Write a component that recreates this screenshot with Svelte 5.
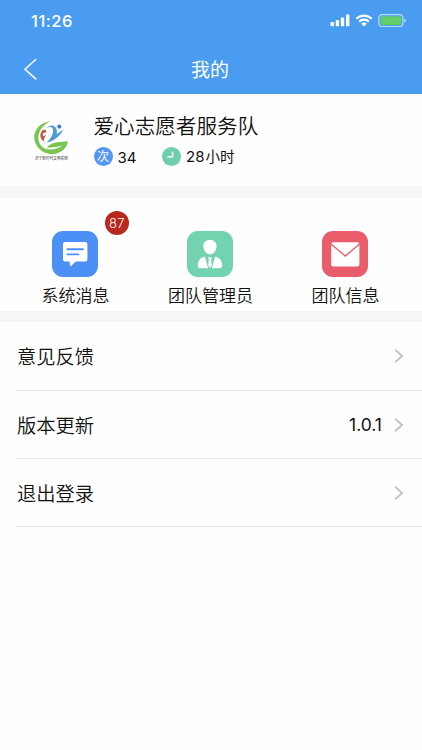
<script>
  const rows = [
    { label: '意见反馈', value: '' },
    { label: '版本更新', value: '1.0.1' },
    { label: '退出登录', value: '' }
  ];
</script>

<main>
  <header>
    <div class="status">
      <span class="time">11:26</span>
      <svg width="78" height="16" viewBox="0 0 78 16" fill="#fff">
        <rect x="0.5" y="9" width="3.4" height="4.3" rx="0.9" />
        <rect x="5.7" y="7" width="3.4" height="6.3" rx="0.9" />
        <rect x="10.8" y="4.5" width="3.4" height="8.8" rx="0.9" />
        <rect x="16" y="1.5" width="3.4" height="11.8" rx="0.9" />
        <g fill="none" stroke="#fff" stroke-width="2.2">
          <path d="M26.3 5.8 C30.5 1.5 37.5 1.5 41.7 5.8" />
          <path d="M29.1 8.7 C31.8 6 36.2 6 38.9 8.7" />
        </g>
        <path d="M31.3 10.7 Q34 8.5 36.7 10.7 L34 13.5 Z" />
        <rect x="48.9" y="1.7" width="24" height="11.8" rx="3.4" fill="none" stroke="#b5dcf2" stroke-width="1.2" />
        <rect x="50.6" y="3.3" width="20.6" height="8.6" rx="2" fill="#66ce69" />
        <path d="M74.3 5.7 Q76 6.2 76 7.6 Q76 9 74.3 9.5 Z" fill="#b5dcf2" />
      </svg>
    </div>
    <div class="nav">
      <svg class="back" width="16" height="24" viewBox="0 0 16 24" fill="none" stroke="#fff" stroke-width="1.5">
        <path d="M13.3 2 L2 12.2 L13.3 22.4" />
      </svg>
      <h1>我的</h1>
    </div>
  </header>

  <section class="profile">
    <svg class="logo" width="42" height="46" viewBox="0 0 42 46">
      <path d="M16.5 1.2 C4 2.5 -2 13 1 22 C4.2 31.5 14 35.5 22 33.7 C28.5 32 33.2 27 34 21.6 C28 22 17.5 21.5 12.7 27.6 C18 27.4 25 27.3 29 25 C24.5 28.8 17 30.8 11.5 28.8 C1.5 25 1 8.5 16.5 1.2 Z" fill="#79c552" />
      <path d="M9.3 9.2 C5 13.5 5.5 19 10.4 21.6 C9 18.8 11.3 17.5 11.9 14.5 L9.8 16.3 C8 15.3 8.8 13.3 10.3 12 Z" fill="#bd5740" />
      <circle cx="10.7" cy="11.2" r="1.5" fill="#bd5740" />
      <path d="M12.5 8.2 C16 5.8 19.2 7 19.2 10.8 C19.2 15 16.5 18.8 12.7 22.5 C19.5 21.3 25.5 17 29.3 9.5 L22.6 14.3 C24.5 6.7 18 2.4 12.5 8.2 Z" fill="#4b9bd5" />
      <circle cx="25.3" cy="6.6" r="2.1" fill="#3b7fd0" />
      <text x="1" y="39.8" textLength="33" lengthAdjust="spacingAndGlyphs">济宁新时代文明实践</text>
    </svg>
    <div class="info">
      <h2>爱心志愿者服务队</h2>
      <div class="stats">
        <span class="dot blue">次</span>
        <span class="count">34</span>
        <span class="dot green">
          <svg width="19" height="19" viewBox="0 0 19 19" fill="none" stroke="#fff" stroke-width="1.5"><path d="M10.6 4.8 V9.8 H5.4" /></svg>
        </span>
        <span class="hours">28<i>小时</i></span>
      </div>
    </div>
  </section>

  <section class="menu">
    <div class="item">
      <svg width="46" height="46" viewBox="0 0 46 46">
        <rect width="46" height="46" rx="11" fill="#4c8ff5" />
        <path d="M13 11 H33.4 Q35.4 11 35.4 13 V28.6 Q35.4 30.6 33.4 30.6 H24 L18.6 35.2 Q17.8 35.7 17.8 34.6 V30.6 H13 Q11 30.6 11 28.6 V13 Q11 11 13 11 Z" fill="#fff" />
        <path d="M15.5 18.2 H31 M15.5 23.4 H26.5" stroke="#4c8ff5" stroke-width="1.9" stroke-linecap="round" />
      </svg>
      <span>系统消息</span>
      <b class="badge">87</b>
    </div>
    <div class="item">
      <svg width="46" height="46" viewBox="0 0 46 46">
        <rect width="46" height="46" rx="11" fill="#73d3ae" />
        <path d="M23 8.8 C27.2 8.8 29.8 11.8 29.6 15.5 C29.4 19.8 26.5 23.4 23 23.4 C19.5 23.4 16.6 19.8 16.4 15.5 C16.2 11.8 18.8 8.8 23 8.8 Z" fill="#fff" />
        <path d="M17.8 25.5 L21.2 37.2 H13 Q10.8 37.2 10.8 34.8 C10.8 29.2 13.5 27 17.8 25.5 Z M28.2 25.5 L24.8 37.2 H33 Q35.2 37.2 35.2 34.8 C35.2 29.2 32.5 27 28.2 25.5 Z M21.2 26.2 H24.8 L24.2 28.2 L24.8 34.8 L23 37 L21.2 34.8 L21.8 28.2 Z" fill="#fff" />
      </svg>
      <span>团队管理员</span>
    </div>
    <div class="item">
      <svg width="46" height="46" viewBox="0 0 46 46">
        <rect width="46" height="46" rx="11" fill="#e95d6b" />
        <rect x="9.2" y="11.2" width="28.2" height="24.3" rx="2" fill="#fff" />
        <path d="M9 13 L23.3 25 L37.6 13" fill="none" stroke="#e95d6b" stroke-width="1.4" />
      </svg>
      <span>团队信息</span>
    </div>
  </section>

  <section class="list">
    {#each rows as row}
      <div class="row">
        <span class="label">{row.label}</span>
        <span class="value">{row.value}</span>
        <svg width="10" height="16" viewBox="0 0 10 16" fill="none" stroke="#c5c5c9" stroke-width="2"><path d="M1.2 1.7 L8 8 L1.2 14.3" /></svg>
      </div>
    {/each}
  </section>
</main>

<style>
  :global(body) { background: #fefefe; }
  main {
    width: 422px;
    height: 750px;
    overflow: hidden;
    background: #fefefe;
    color: #111;
    font-family: Inter, "Noto Sans CJK SC", sans-serif;
    font-weight: 350;
  }
  svg { display: block; flex: none; }
  header { height: 94px; background: #4a9cf0; color: #fff; }
  .status {
    height: 42px;
    box-sizing: border-box;
    padding: 0 14px 0 31px;
    display: flex;
    align-items: center;
    justify-content: space-between;
  }
  .time { font-size: 16.5px; font-weight: 500; letter-spacing: 0.55px; }
  .nav { height: 52px; display: grid; grid-template-columns: 60px 1fr 62px; align-items: center; }
  .back { margin: 2px 0 0 23px; }
  h1 { margin: 5px 0 0; font-size: 19px; line-height: 28px; font-weight: 400; text-align: center; }
  .profile {
    height: 92px;
    box-sizing: border-box;
    padding: 18px 0 0 34px;
    display: flex;
  }
  .logo { margin-top: 8px; }
  .logo text { font-size: 4px; fill: #222; }
  .info { margin-left: 17.5px; }
  h2 { margin: 0; font-size: 20.6px; line-height: 30px; font-weight: 350; white-space: nowrap; }
  .stats { display: flex; align-items: center; height: 19px; margin-top: 5px; font-size: 15px; font-weight: 400; }
  .dot { width: 19px; height: 19px; border-radius: 50%; color: #fff; flex: none; }
  .blue { background: #5596f0; font-size: 12px; line-height: 20px; text-align: center; }
  .green { background: #6dcfae; }
  .count { width: 44.5px; margin: 1px 0 0 5px; }
  .hours { margin-left: 5px; white-space: nowrap; line-height: 19px; }
  .hours i { font-style: normal; margin-left: 1px; font-size: 14.5px; }
  .menu {
    height: 135.5px;
    box-sizing: border-box;
    border-top: 12px solid #f6f6f6;
    border-bottom: 11px solid #f6f6f6;
    padding: 33px 9px 0 8px;
    display: grid;
    grid-template-columns: repeat(3, 1fr);
  }
  .item { position: relative; display: flex; flex-direction: column; align-items: center; }
  .item svg { margin-left: -1px; }
  .item span { font-size: 17px; line-height: 24px; margin-top: 7px; white-space: nowrap; }
  .badge {
    position: absolute;
    left: 97px;
    top: -20px;
    width: 24px;
    height: 24px;
    border-radius: 50%;
    background: #b8281f;
    color: #fff;
    font-size: 13px;
    line-height: 24px;
    font-weight: 350;
    letter-spacing: 0.3px;
    text-align: center;
  }
  .list { padding-left: 16px; }
  .row {
    height: 68.4px;
    box-sizing: border-box;
    display: flex;
    align-items: center;
    padding: 3px 18px 0 1px;
    border-bottom: 1px solid #e3e3e3;
  }
  .row svg { margin-bottom: 2px; }
  .row:first-child { height: 69px; }
  .label { flex: 1; font-size: 19.3px; line-height: 28px; }
  .value { font-size: 17.5px; font-weight: 400; margin: 0 12px 2px 0; }
</style>
